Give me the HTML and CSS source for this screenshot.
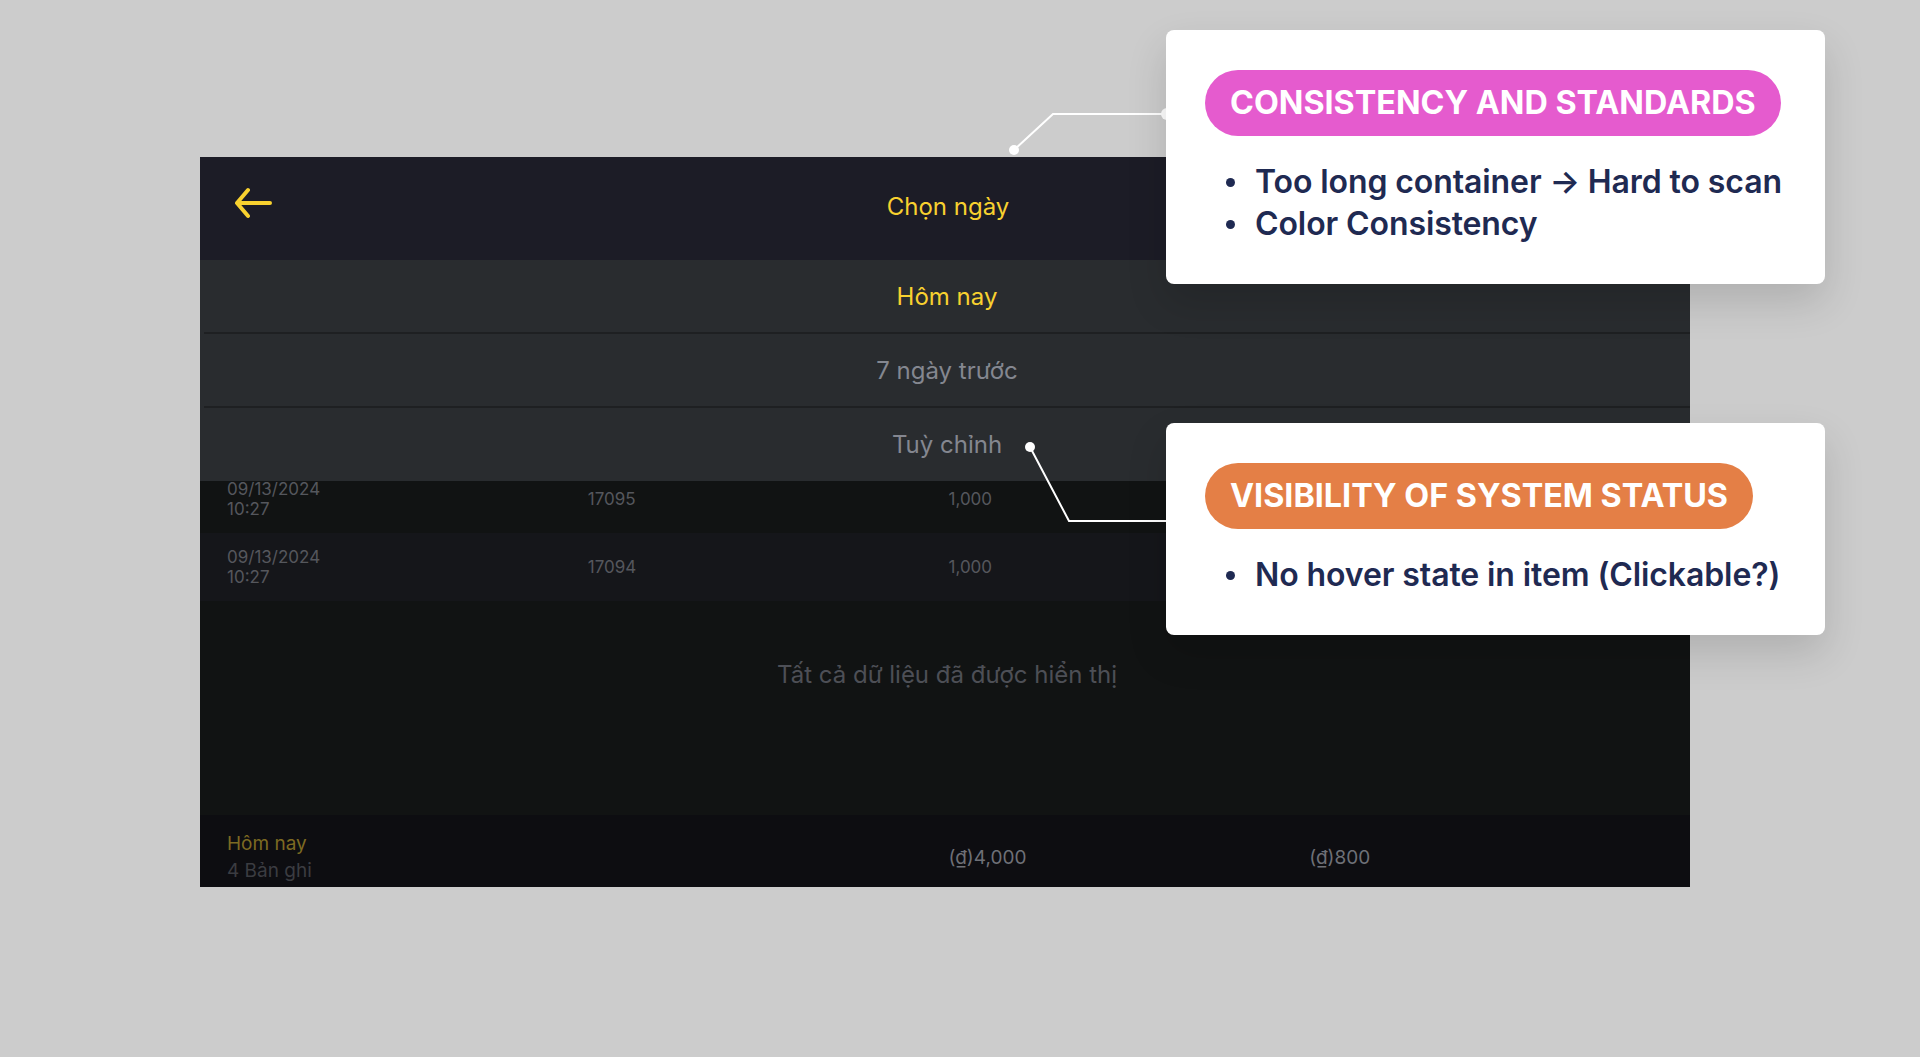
FILE: index.html
```html
<!DOCTYPE html>
<html lang="vi">
<head>
<meta charset="utf-8">
<title>Chọn ngày</title>
<link rel="stylesheet" href="styles.css">
</head>
<body>
<div class="stage">
  <div class="app">
    <header class="app-header">
      <svg class="back" viewBox="0 0 38 32" width="38" height="32" aria-hidden="true">
        <path d="M36 16 H3 M14 3 L3 16 L14 29" fill="none" stroke="#f8d12f" stroke-width="4" stroke-linecap="round" stroke-linejoin="round"/>
      </svg>
      <h1 class="title">Chọn ngày</h1>
      <span></span>
    </header>
    <main class="content">
      <div class="row row-head"><span>Thời gian</span><span>Mã đơn</span><span>Số tiền</span><span>Hoa hồng</span></div>
      <div class="rows">
        <div class="row"><span>09/13/2024<br>10:28</span><span>17097</span><span>1,000</span><span>200</span></div>
        <div class="row"><span>09/13/2024<br>10:28</span><span>17096</span><span>1,000</span><span>200</span></div>
        <div class="row"><span>09/13/2024<br>10:27</span><span>17095</span><span>1,000</span><span>200</span></div>
        <div class="row"><span>09/13/2024<br>10:27</span><span>17094</span><span>1,000</span><span>200</span></div>
      </div>
      <p class="end-msg">Tất cả dữ liệu đã được hiển thị</p>
      <div class="dropdown">
        <div class="dd-item active">Hôm nay</div>
        <div class="dd-item">7 ngày trước</div>
        <div class="dd-item">Tuỳ chỉnh</div>
      </div>
    </main>
    <footer class="summary">
      <div class="sum-label"><span class="sum-day">Hôm nay</span><span class="sum-count">4 Bản ghi</span></div>
      <span></span>
      <span class="sum-val">(₫)4,000</span>
      <span class="sum-val">(₫)800</span>
    </footer>
  </div>

  <svg class="connectors" viewBox="0 0 1920 1057" width="1920" height="1057" aria-hidden="true">
    <polyline points="1014,150 1053,114 1168,114" fill="none" stroke="#ffffff" stroke-width="2"/>
    <circle cx="1014" cy="150" r="5" fill="#ffffff"/>
    <circle cx="1167" cy="114" r="6" fill="#ffffff"/>
    <polyline points="1030,447 1069,521 1168,521" fill="none" stroke="#ffffff" stroke-width="2"/>
    <circle cx="1030" cy="447" r="5" fill="#ffffff"/>
  </svg>

  <section class="note note-1">
    <span class="tag tag-pink">CONSISTENCY AND STANDARDS</span>
    <ul class="points">
      <li>Too long container → Hard to scan</li>
      <li>Color Consistency</li>
    </ul>
  </section>

  <section class="note note-2">
    <span class="tag tag-orange">VISIBILITY OF SYSTEM STATUS</span>
    <ul class="points">
      <li>No hover state in item (Clickable?)</li>
    </ul>
  </section>
</div>
</body>
</html>
```

FILE: styles.css
```css
* {
  box-sizing: border-box;
  margin: 0;
  padding: 0;
}

html,
body {
  width: 1920px;
  height: 1057px;
  overflow: hidden;
}

body {
  background: #cccccc;
  font-family: "Inter", "Noto Sans", sans-serif;
}

.stage {
  position: relative;
  width: 1920px;
  height: 1057px;
  padding: 157px 0 0 200px;
}

/* ---------- app panel ---------- */
.app {
  width: 1490px;
  height: 730px;
  display: flex;
  flex-direction: column;
  background: #111313;
  overflow: hidden;
}

.app-header {
  height: 103px;
  flex: none;
  background: #1c1c26;
  display: grid;
  grid-template-columns: 1fr auto 1fr;
  align-items: center;
  padding: 0 31px 0 37px;
}

.back {
  align-self: start;
  margin-top: 30px;
  margin-left: -3px;
  display: block;
}

.title {
  font-size: 24px;
  font-weight: 400;
  color: #f8d12f;
  line-height: 30px;
  margin-bottom: 4px;
}

.content {
  flex: 1;
  position: relative;
}

.row {
  height: 68.25px;
  display: grid;
  grid-template-columns: repeat(4, 1fr);
  padding: 0 20px 0 27px;
  align-items: center;
  font-size: 17px;
  line-height: 20px;
  color: #55575d;
}

.rows .row:nth-child(even) {
  background: #15161a;
}

.row-head {
  color: #6a6c72;
}

.end-msg {
  padding-top: 59px;
  padding-left: 4px;
  text-align: center;
  font-size: 24px;
  line-height: 30px;
  color: #4d4f56;
}

.dropdown {
  position: absolute;
  top: 0;
  left: 0;
  right: 0;
  padding-left: 4px;
  background: #292c2f;
}

.dd-item {
  height: 74px;
  border-bottom: 2px solid #1e2022;
  display: flex;
  align-items: center;
  justify-content: center;
  font-size: 24px;
  color: #848790;
}

.dd-item:last-child {
  height: 73px;
  border-bottom: 0;
}

.dd-item.active {
  color: #f8d12f;
}

.summary {
  height: 72px;
  flex: none;
  background: #0d0d11;
  display: grid;
  grid-template-columns: repeat(4, 1fr);
  padding: 12px 20px 0 27px;
  align-items: center;
  font-size: 19px;
  line-height: 27px;
}

.sum-label {
  display: flex;
  flex-direction: column;
}

.sum-day {
  color: #7d6a22;
}

.sum-count {
  color: #3b3c41;
}

.sum-val {
  color: #6e7077;
}

/* ---------- annotations ---------- */
.connectors {
  position: absolute;
  left: 0;
  top: 0;
  pointer-events: none;
}

.note {
  position: absolute;
  left: 1166px;
  width: 659px;
  background: #ffffff;
  border-radius: 8px;
  padding: 40px 30px 39px 39px;
  box-shadow: 0 18px 40px rgba(0, 0, 0, 0.14);
}

.note-1 {
  top: 30px;
}

.note-2 {
  top: 423px;
}

.tag {
  display: inline-block;
  height: 66px;
  line-height: 66px;
  padding: 0 25px;
  border-radius: 33px;
  color: #ffffff;
  font-weight: 700;
  font-size: 32.3px;
  white-space: nowrap;
}

.tag-pink {
  background: #e55bce;
}

.tag-orange {
  background: #e47f46;
}

.points {
  list-style: none;
  margin-top: 25px;
}

.points li {
  position: relative;
  padding-left: 50px;
  font-size: 32px;
  line-height: 42px;
  font-weight: 600;
  letter-spacing: -0.1px;
  white-space: nowrap;
  color: #1f2a52;
}

.points li::before {
  content: "";
  position: absolute;
  left: 21px;
  top: 17px;
  width: 9px;
  height: 9px;
  border-radius: 50%;
  background: #1f2a52;
}
```
